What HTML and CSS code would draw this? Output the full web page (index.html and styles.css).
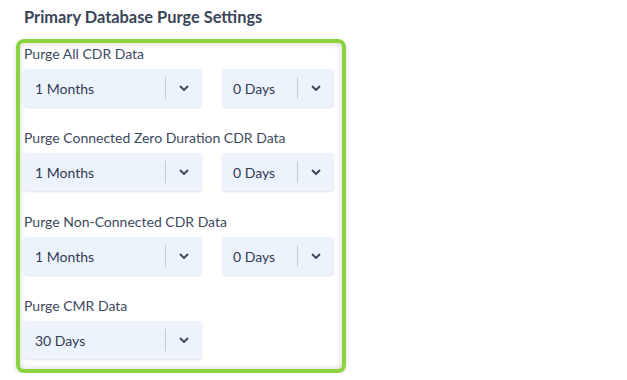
FILE: index.html
```html
<!DOCTYPE html>
<html lang="en">
<head>
    <meta charset="UTF-8">
    <title>Purge Settings</title>
    <link rel="stylesheet" href="styles.css">
</head>
<body>
<div class="page">
    <h3 class="section-title">Primary Database Purge Settings</h3>

    <div class="purge-box">
        <!-- All CDR -->
        <div class="purge-row">
            <label>Purge All CDR Data</label>
            <div class="select-pair">
                <div class="select wide"><span>1 Months</span><i class="sep"></i><svg class="chev" viewBox="0 0 10 6"><path d="M1 1l4 4 4-4"/></svg></div>
                <div class="select narrow"><span>0 Days</span><i class="sep"></i><svg class="chev" viewBox="0 0 10 6"><path d="M1 1l4 4 4-4"/></svg></div>
            </div>
        </div>

        <!-- Connected zero duration -->
        <div class="purge-row">
            <label>Purge Connected Zero Duration CDR Data</label>
            <div class="select-pair">
                <div class="select wide"><span>1 Months</span><i class="sep"></i><svg class="chev" viewBox="0 0 10 6"><path d="M1 1l4 4 4-4"/></svg></div>
                <div class="select narrow"><span>0 Days</span><i class="sep"></i><svg class="chev" viewBox="0 0 10 6"><path d="M1 1l4 4 4-4"/></svg></div>
            </div>
        </div>

        <!-- Non-connected -->
        <div class="purge-row">
            <label>Purge Non-Connected CDR Data</label>
            <div class="select-pair">
                <div class="select wide"><span>1 Months</span><i class="sep"></i><svg class="chev" viewBox="0 0 10 6"><path d="M1 1l4 4 4-4"/></svg></div>
                <div class="select narrow"><span>0 Days</span><i class="sep"></i><svg class="chev" viewBox="0 0 10 6"><path d="M1 1l4 4 4-4"/></svg></div>
            </div>
        </div>

        <!-- CMR -->
        <div class="purge-row">
            <label>Purge CMR Data</label>
            <div class="select-pair">
                <div class="select wide"><span>30 Days</span><i class="sep"></i><svg class="chev" viewBox="0 0 10 6"><path d="M1 1l4 4 4-4"/></svg></div>
            </div>
        </div>
    </div>
</div>
</body>
</html>
```
FILE: styles.css
```css
body {
    margin: 0;
    font-family: Lato, 'Noto Sans', sans-serif;
    background-color: #fff;
    color: #3b4559;
}

.page {
    padding: 7px 0 0 16px;
}

.section-title {
    margin: 0 0 12px 8px;
    font-size: 16.4px;
    line-height: 20px;
    font-weight: 700;
    color: #3a4458;
}

.purge-box {
    width: 314px;
    border: 4px solid #8dd33f;
    border-radius: 8px;
    padding: 1px 4px 10px 4px;
    box-shadow: inset 0 0 6px rgba(0, 0, 0, 0.18), 0 1px 4px rgba(0, 0, 0, 0.15);
}

.purge-row {
    margin-bottom: 21px;
}

.purge-row:last-child {
    margin-bottom: 0;
}

label {
    display: block;
    font-size: 14px;
    line-height: 20px;
    margin-bottom: 5px;
    color: #3d4a5e;
}

.select-pair {
    display: flex;
    gap: 20px;
}

.select {
    height: 38px;
    display: flex;
    align-items: center;
    background-color: #edf3fd;
    border-radius: 4px;
    box-shadow: 0 1px 2px rgba(0, 0, 0, 0.12);
    font-size: 14px;
    color: #2f3b52;
    box-sizing: border-box;
}

.select span {
    flex: 1;
    padding-left: 11px;
}

.select.wide {
    width: 178px;
}

.select.narrow {
    width: 112px;
}

.sep {
    width: 1px;
    height: 22px;
    background-color: #c3c9d2;
}

.chev {
    width: 10px;
    height: 6px;
    margin: 0 13px 0 13px;
    fill: none;
    stroke: #3d4a5e;
    stroke-width: 2;
}
```
